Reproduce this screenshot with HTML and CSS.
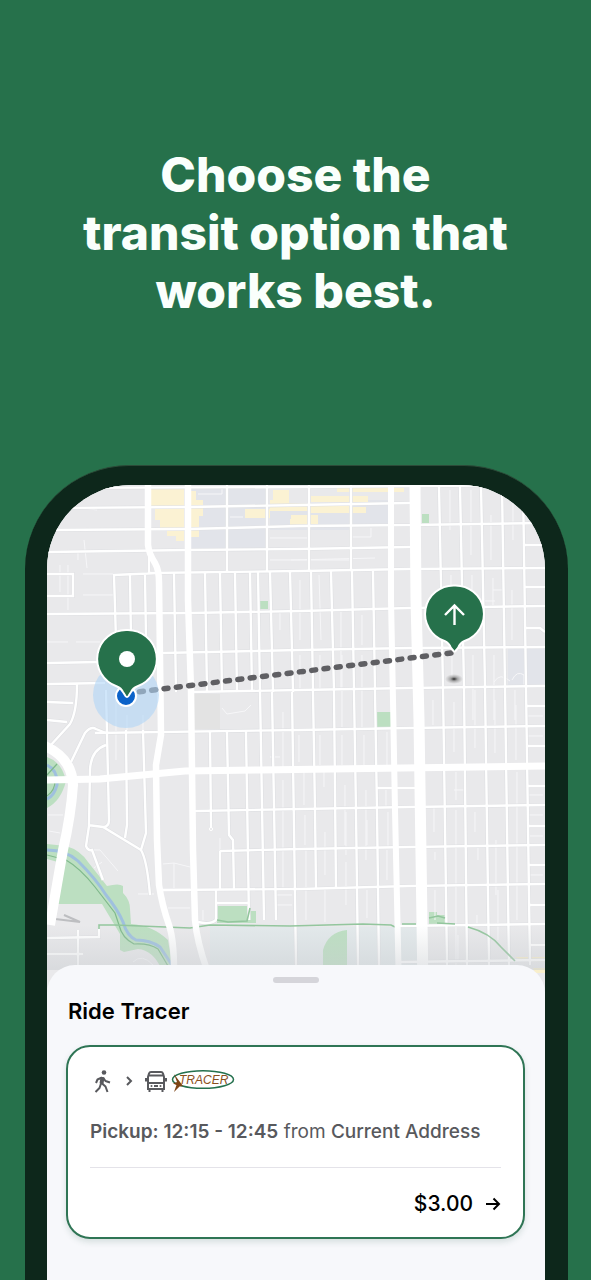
FILE: index.html
```html
<!DOCTYPE html>
<html lang="en">
<head>
    <meta charset="UTF-8">
    <meta name="viewport" content="width=device-width, initial-scale=1.0">
    <title>Ride Tracer</title>
    <link rel="stylesheet" href="styles.css">
</head>
<body>
    <h1>Choose the<br>transit option that<br>works best.</h1>

    <main class="phone">
        <div class="screen">
            <svg class="map" viewBox="47 485 498 510" role="img" aria-label="Map of the route">
                <defs>
                    <linearGradient id="fade" x1="0" y1="0" x2="0" y2="1">
                        <stop offset="0" stop-color="#c8ccd0" stop-opacity="0"/>
                        <stop offset="1" stop-color="#c8ccd0" stop-opacity="0.5"/>
                    </linearGradient>
                    <radialGradient id="spot">
                        <stop offset="0" stop-color="#222"/>
                        <stop offset="0.4" stop-color="#777" stop-opacity="0.6"/>
                        <stop offset="1" stop-color="#999" stop-opacity="0"/>
                    </radialGradient>

                    <!-- ordinary streets -->
                    <g id="streets">
                        <path d="M47 488L300 487L545 485M47 508L189 507L300 505L410 503M47 530L189 529L300 526L410 525M410 525L545 523M47 552L189 550L300 549L410 547M148 573L300 571L410 569L545 568M113 575L160 573M47 614L189 613L300 611L410 608L545 606M162 653L300 650L410 648L545 647M190 692L300 690L410 688L545 686M95 733L300 730L410 728L545 726M195 811L300 809L410 807L545 805M220 851L300 849L410 847L545 845M163 890L300 889L410 886L545 884M400 926L545 924M400 962L545 960"/>
                        <path d="M227 485V571M267 485V571M309 485V571M351 485V571"/>
                        <path d="M114 575L116 640M130 575L131 640M145 575L146 640M149 550V573"/>
                        <path d="M174 573L176 692M205 572L207 692M220 572L222 692M235 572L237 692M250 572L252 692M258 572L260 692M270 571L273 692M290 571L293 692"/>
                        <path d="M210 732L211 828M227 732L229 835L233 840L234 890M246 731L249 920M260 690L264 920M272 692L276 920M292 692L296 965"/>
                        <path d="M311 571L315 811L316 889M331 571L334 692L336 889M352 571L356 811L358 965M373 571L377 811L379 965"/>
                        <path d="M439 485L443 686L447 965M460 485L464 686L467 965M481 485L485 686L489 965M502 485L505 686L509 965M523 485L526 686L530 965"/>
                        <path d="M524 545H545M524 587H545M524 628H540L545 632M526 706H545M526 746H545M528 786H545M528 826H545M529 865H545M530 905H545M530 945H545M377 788H418"/>
                        <path d="M47 574H73V596H47M47 663L100 662M47 684L105 683M77 684Q77 712 70 724L50 746M47 702L73 703M47 720L67 722"/>
                        <path d="M71 762L85 733Q91 726 96 729L106 733M106 690L109 820Q109 827 103 827M106 745Q91 750 90 770L89 826L86 846Q88 851 92 850L103 880M88 825L103 827L141 850M126 730L127 825L125 838M143 730L146 833L141 850Q147 860 150 895"/>
                        <path d="M163 890H190M249 903H216M216 890V920Q210 925 198 922M220 851V890M47 938L99 937V925M47 954H83M78 930V965"/>
                    </g>

                    <g id="roads">
                        <path stroke-width="6.500" d="M148 485V545Q149 554 155 563Q159 570 159 582L161 735L156 765L157 840L159 885Q162 905 169 925Q174 940 174 970"/>
                        <path stroke-width="6.500" d="M188 485V600L191 690L193 850L195 920Q197 942 207 970"/>
                        <path stroke-width="6" d="M391 485V600L393 700L395 810L399 990"/>
                        <path stroke-width="11" d="M415 485L416 600L419 720L423 990"/>
                        <path stroke-width="7" d="M47 780L100 779L185 771L260 770L545 766"/>
                        <path stroke-width="10" d="M45 746Q72 758 73 785Q71 815 63 850L50 925"/>
                    </g>
                </defs>

                <rect x="47" y="485" width="498" height="510" fill="#e9e9eb"/>

                <!-- districts -->
                <path fill="#e2e4ea" d="M190 487H266V549L190 550ZM270 505H350V530H270ZM352 500H388V527H352ZM508 648H545V686H508Z"/>
                <path fill="#e3e3e3" d="M194 694H220V729H194Z"/>
                <path fill="#fbf2d3" d="M151 489H184V541H176V536H167V529H160V520H155V506H151ZM191 491H196V500H203V516H199V537H191V520H191ZM273 490H289V503H350V511H270V518H245V509H270V500H273ZM291 515H318V524H291ZM311 496H368V502H311ZM337 488H404V492H337ZM310 507H366V513H310ZM290 519H310V527H290Z"/>
                <path fill="#f8efcb" d="M515 957H545V962H525ZM533 968H545V973H535Z"/>

                <!-- parks -->
                <g fill="#bcdfc1">
                    <path d="M260 601H268V609H260ZM377 712H391V727H377ZM217 906H249V911H256V923H217ZM429 912H437V915H445V924H429Z"/>
                    <path d="M422 514H429V524H422Z"/>
                    <path d="M47 757Q62 762 66 781Q61 801 47 808Z"/>
                    <path d="M47 844L66 846Q80 850 88 862L107 886Q119 883 123 886V893Q130 900 130 909L131 924Q152 925 168 940L173 970H162Q153 950 138 949L124 952L120 950V934L102 904H58L65 864L47 859Z"/>
                </g>
                <rect x="210" y="927" width="208" height="42" fill="#e3e9eb"/>
                <path fill="#bcdfc1" d="M323 968V950Q328 932 347 930V968Z"/>

                <!-- alleys -->
                <path class="alley" d="M84 540L87 568M78 552V560M60 565V592M68 565V610M83 574H113M83 595H113M47 642H68M76 642H100M97 510L60 505M198 494H222V488M230 517H243M270 538H310M270 560H350M352 537H371V528M291 560L375 558M280 612V630M300 580V640M319 575L321 640M341 612V690M362 615V645M300 655V688M320 655V688M342 655V727M362 655V727M299 735V762M320 735V765M342 735V765M364 735V765M304 772V805M324 772V787M345 785V845M366 790V860M305 815V845M325 832V875M346 812V855M367 820V845M306 850V920M325 890V922M346 862V905M367 890V918M387 732V765M386 790V808M388 812V848M387 850V880"/>
                <path class="alley" d="M450 490V530M471 490V555M491 515V560M513 488V540M451 575V600M472 575V612M493 578V605M512 590V640M452 655V680M473 655V720M494 655V720M515 690V720M433 700V725M454 702V752M475 690V748M495 700V753M516 705V760M456 772V800M475 812V832M456 810V965M496 840V895M517 772V920M434 808V832M435 852V860M478 848V860M477 915V925M458 935V960M498 890V940M435 890V920M528 716H543M528 736H543M528 795H543M528 815H543M528 836H543M528 875H543M493 590H503M495 601H485M494 682Q500 672 510 681M512 680Q517 670 524 675V685M454 790H464"/>
                <path class="alley" d="M222 708L227 714L245 711L251 705M283 712V770M283 780V890M270 757H280M220 838V852M163 864L174 863L190 867M174 863V888M168 908H190M92 850H100L118 871M102 862L94 868M48 815H63M49 831L60 833M138 894H154M276 895H292M276 905H292M203 910V920M133 962Q142 953 153 965M127 715V730M143 715V730M116 700V760"/>

                <use href="#streets" class="casing"/>
                <use href="#streets" class="street"/>

                <!-- waterways and trails -->
                <g fill="none">
                    <path stroke="#9fc0de" stroke-width="3" d="M47 850Q66 850 78 861Q96 879 106 895Q118 910 123 922Q127 936 136 940Q150 940 160 947L172 965M47 765Q58 770 57 785Q54 796 47 799"/>
                    <path stroke="#7fb98b" stroke-width="1.2" d="M47 855L66 860Q80 868 95 887L115 913L119 925Q122 938 134 944Q149 943 158 949L168 966M47 775L57 764M47 796Q56 790 55 778"/>
                    <path stroke="#93c69d" stroke-width="1.600" d="M99 929V925H115L190 928L210 925L290 926L363 924L391 925L395 927M402 924H416M429 918L438 916L445 918M437 923L455 924M468 927Q490 933 501 947L515 961M217 920L228 922L247 921L250 908"/>
                    <path stroke="#bdbec1" stroke-width="2" d="M47 918L80 922L64 915"/>
                </g>

                <use href="#roads" class="road"/>
                <circle cx="211" cy="829" r="1.6" fill="none" stroke="#fff"/>
                <rect x="47" y="925" width="498" height="45" fill="url(#fade)"/>

                <!-- route -->
                <path class="route" d="M451 653L138 692"/>
                <ellipse cx="454" cy="679" rx="9" ry="5" fill="url(#spot)"/>
                <circle cx="126" cy="695" r="33" fill="#b0d6f6" fill-opacity="0.6"/>
                <circle class="location" cx="126" cy="696" r="10"/>

                <path class="pin" d="M127 630A29 29 0 0 1 137 686.500Q133 688 131 692L128.500 696Q127 698 125.500 696L123 692Q121 688 117 686.500A29 29 0 0 1 127 630Z"/>
                <circle cx="127" cy="659" r="8" fill="#fff"/>
                <path class="pin" d="M454.500 585.500A28.500 28.500 0 0 1 464.500 641Q460 643 458 648L455.500 651Q454.500 652 453.500 651L451 648Q449 643 444.500 641A28.500 28.500 0 0 1 454.500 585.500Z"/>
                <path class="pin-arrow" d="M454.500 625V605M445 615L454.500 605.500L464 615"/>
            </svg>

            <section class="sheet">
                <div class="handle"></div>
                <h2>Ride Tracer</h2>
                <article class="card">
                    <div class="legs">
                        <svg class="walk" viewBox="0 0 24 24" aria-label="Walk">
                            <circle cx="14" cy="3.500" r="2.300"/>
                            <path d="M12.500 8L11 15M12 8.500L7.500 10.500L6 14M13 8.500L15.500 12L20 13.500"/>
                            <path d="M11 14.500L9.500 19L5.500 23M11.500 14L15.500 17.500L17.500 23"/>
                            <path class="torso" d="M12.500 8.500L11.500 14.500"/>
                        </svg>
                        <svg class="next" viewBox="0 0 8 10" aria-hidden="true">
                            <path d="M2 1l4 4-4 4"/>
                        </svg>
                        <svg class="bus" viewBox="0 0 24 24" aria-label="Bus">
                            <path d="M4 20V8L5 4.500Q5.500 3 7 3H17Q18.500 3 19 4.500L20 8V20ZM5 6.500H19M4 14H20M2 9V12.500M22 9V12.500M5.500 20V23M18.500 20V23M10 17H14"/>
                            <circle cx="7.500" cy="17" r="1"/>
                            <circle cx="16.500" cy="17" r="1"/>
                        </svg>
                        <svg class="logo" viewBox="0 0 66 24">
                            <ellipse cx="33" cy="10.500" rx="30.500" ry="8.800"/>
                            <path d="M4 5L8.500 11L13 17L9.500 17.500L4 23L6.500 16L3 14.500L7 13Z"/>
                            <text x="9" y="15">TRACER</text>
                        </svg>
                    </div>
                    <p class="pickup"><strong>Pickup: 12:15 - 12:45</strong> from <span>Current Address</span></p>
                    <a class="fare" href="#">
                        $3.00
                        <svg viewBox="0 0 16 16" aria-hidden="true">
                            <path d="M1 8H14M8.500 2.500L14 8L8.500 13.500"/>
                        </svg>
                    </a>
                </article>
            </section>
        </div>
    </main>
</body>
</html>
```

FILE: styles.css
```css
* {
    margin: 0;
    padding: 0;
    box-sizing: border-box;
}

body {
    font-family: Inter, 'Liberation Sans', sans-serif;
    min-height: 100vh;
    background: #26714b;
    display: flex;
    flex-direction: column;
}

h1 {
    padding: 146px 16px 145px;
    font-size: 48px;
    line-height: 58px;
    font-weight: 800;
    text-align: center;
    color: #fafffc;
}

.phone {
    flex: 1;
    display: flex;
    margin: 0 23px 0 25px;
    padding: 19px 23px 0 22px;
    background: #0d271b;
    border-top: 1px solid #2c4a38;
    border-radius: 104px 104px 0 0;
}

.screen {
    flex: 1;
    display: flex;
    flex-direction: column;
    overflow: hidden;
    background: #f7f8fa;
    border-radius: 84px 84px 0 0;
}

.map {
    display: block;
    width: 100%;
}

.casing,
.street,
.road,
.alley {
    fill: none;
    stroke: #fff;
}

.casing {
    stroke: #dfe0e3;
    stroke-width: 3.6px;
}

.street {
    stroke-width: 2.4px;
}

.alley {
    stroke: #f6f6f8;
    stroke-width: 1px;
}

.route {
    fill: none;
    stroke: #5f5f63;
    stroke-width: 5.5px;
    stroke-linecap: round;
    stroke-dasharray: 4 8.4;
}

.location {
    fill: #0b62c9;
    stroke: #fff;
    stroke-width: 2px;
}

.pin {
    fill: #26714b;
    stroke: #fff;
    stroke-width: 2px;
}

.pin-arrow {
    fill: none;
    stroke: #fff;
    stroke-width: 2.4px;
}

.sheet {
    position: relative;
    flex: 1;
    margin-top: -30px;
    padding: 12px 20px 40px 19px;
    background: #f7f8fb;
    border-radius: 28px 28px 0 0;
}

.handle {
    width: 46px;
    height: 6px;
    margin: 0 auto 14px;
    background: #d5d5da;
    border-radius: 3px;
}

h2 {
    padding: 0 2px;
    margin-bottom: 20px;
    font-size: 22px;
    line-height: 28px;
    font-weight: 600;
    color: #000;
}

.card {
    padding: 22px 22px 21px;
    background: #fff;
    border: 2px solid #2f7555;
    border-radius: 24px;
    box-shadow: 0 3px 6px rgba(30, 80, 60, 0.15);
}

.legs {
    display: flex;
    align-items: center;
    height: 24px;
}

.legs svg {
    height: 24px;
}

.walk,
.next,
.bus {
    fill: none;
    stroke: #58595d;
    stroke-width: 2px;
}

.walk,
.bus {
    width: 24px;
}

.walk path {
    stroke-linejoin: round;
}

.walk .torso {
    stroke-width: 4px;
}

.walk circle,
.bus circle {
    fill: #58595d;
    stroke: none;
}

.legs .next {
    width: 8px;
    height: 10px;
    margin: 0 11px;
}

.logo {
    width: 66px;
    margin-left: 2px;
}

.logo ellipse {
    fill: none;
    stroke: #24704d;
    stroke-width: 1.5px;
}

.logo path {
    fill: #7d4516;
}

.logo text {
    font: italic 12px 'Liberation Sans', sans-serif;
    fill: #8a4f1c;
}

.pickup {
    padding: 27px 0 23px;
    border-bottom: 1px solid #e4e3e9;
    font-size: 19px;
    line-height: 24px;
    color: #58595d;
}

.pickup strong {
    font-weight: 600;
}

.pickup span {
    font-weight: 500;
}

.fare {
    display: flex;
    justify-content: flex-end;
    align-items: center;
    gap: 12px;
    padding-top: 24px;
    font-size: 21px;
    line-height: 24px;
    font-weight: 500;
    color: #000;
    text-decoration: none;
}

.fare svg {
    width: 16px;
    height: 16px;
    fill: none;
    stroke: #000;
    stroke-width: 2px;
}
```
